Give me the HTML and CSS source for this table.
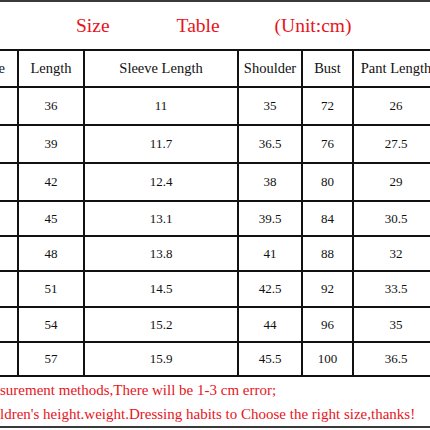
FILE: index.html
```html
<!DOCTYPE html>
<html>
<head>
<meta charset="utf-8">
<link rel="stylesheet" href="styles.css">
</head>
<body>
<div class="page">
  <div class="title">
    <span class="t-size">Size</span>
    <span class="t-table">Table</span>
    <span class="t-unit">(Unit:cm)</span>
  </div>
  <div class="grid">
    <div class="cell head">Size</div>
    <div class="cell head">Length</div>
    <div class="cell head">Sleeve Length</div>
    <div class="cell head">Shoulder</div>
    <div class="cell head">Bust</div>
    <div class="cell head">Pant Length</div>

    <div class="cell"></div><div class="cell">36</div><div class="cell">11</div><div class="cell">35</div><div class="cell">72</div><div class="cell">26</div>
    <div class="cell"></div><div class="cell">39</div><div class="cell">11.7</div><div class="cell">36.5</div><div class="cell">76</div><div class="cell">27.5</div>
    <div class="cell"></div><div class="cell">42</div><div class="cell">12.4</div><div class="cell">38</div><div class="cell">80</div><div class="cell">29</div>
    <div class="cell"></div><div class="cell">45</div><div class="cell">13.1</div><div class="cell">39.5</div><div class="cell">84</div><div class="cell">30.5</div>
    <div class="cell"></div><div class="cell">48</div><div class="cell">13.8</div><div class="cell">41</div><div class="cell">88</div><div class="cell">32</div>
    <div class="cell"></div><div class="cell">51</div><div class="cell">14.5</div><div class="cell">42.5</div><div class="cell">92</div><div class="cell">33.5</div>
    <div class="cell"></div><div class="cell">54</div><div class="cell">15.2</div><div class="cell">44</div><div class="cell">96</div><div class="cell">35</div>
    <div class="cell"></div><div class="cell">57</div><div class="cell">15.9</div><div class="cell">45.5</div><div class="cell">100</div><div class="cell">36.5</div>
  </div>
  <div class="notes">
    <div class="note">surement methods,There will be 1-3 cm error;</div>
    <div class="note">ldren's height.weight.Dressing habits to Choose the right size,thanks!</div>
  </div>
</div>
</body>
</html>
```
FILE: styles.css
```css
html, body {
  margin: 0;
  padding: 0;
  background: #fff;
}
.page {
  width: 430px;
  height: 430px;
  overflow: hidden;
  font-family: "Liberation Serif", "Times New Roman", serif;
  color: #111;
}
.title {
  height: 47px;
  border-top: 2px solid #3a3a3a;
  display: flex;
  align-items: center;
  line-height: 47px;
  font-size: 19.5px;
  color: #e8141c;
  white-space: nowrap;
}
.t-size { margin-left: 76px; }
.t-table { margin-left: 67px; }
.t-unit { margin-left: 55px; }
.grid {
  display: grid;
  margin-left: -32px;
  width: 472px;
  grid-template-columns: 49px 64px 152px 62px 49px 84px;
  grid-template-rows: 35px 36px 36px 36px 33px 33px 34px 33px 32px;
  gap: 2px;
  padding: 2px 0;
  background: #111;
}
.cell {
  background: #fff;
  display: flex;
  align-items: center;
  justify-content: center;
  font-size: 13px;
  white-space: nowrap;
}
.cell.head {
  font-size: 14.5px;
}
.notes {
  box-sizing: border-box;
  height: 51px;
  padding-top: 1px;
  border-bottom: 2px solid #3a3a3a;
  color: #e8141c;
  font-size: 15px;
  line-height: 24px;
  white-space: nowrap;
}
```
